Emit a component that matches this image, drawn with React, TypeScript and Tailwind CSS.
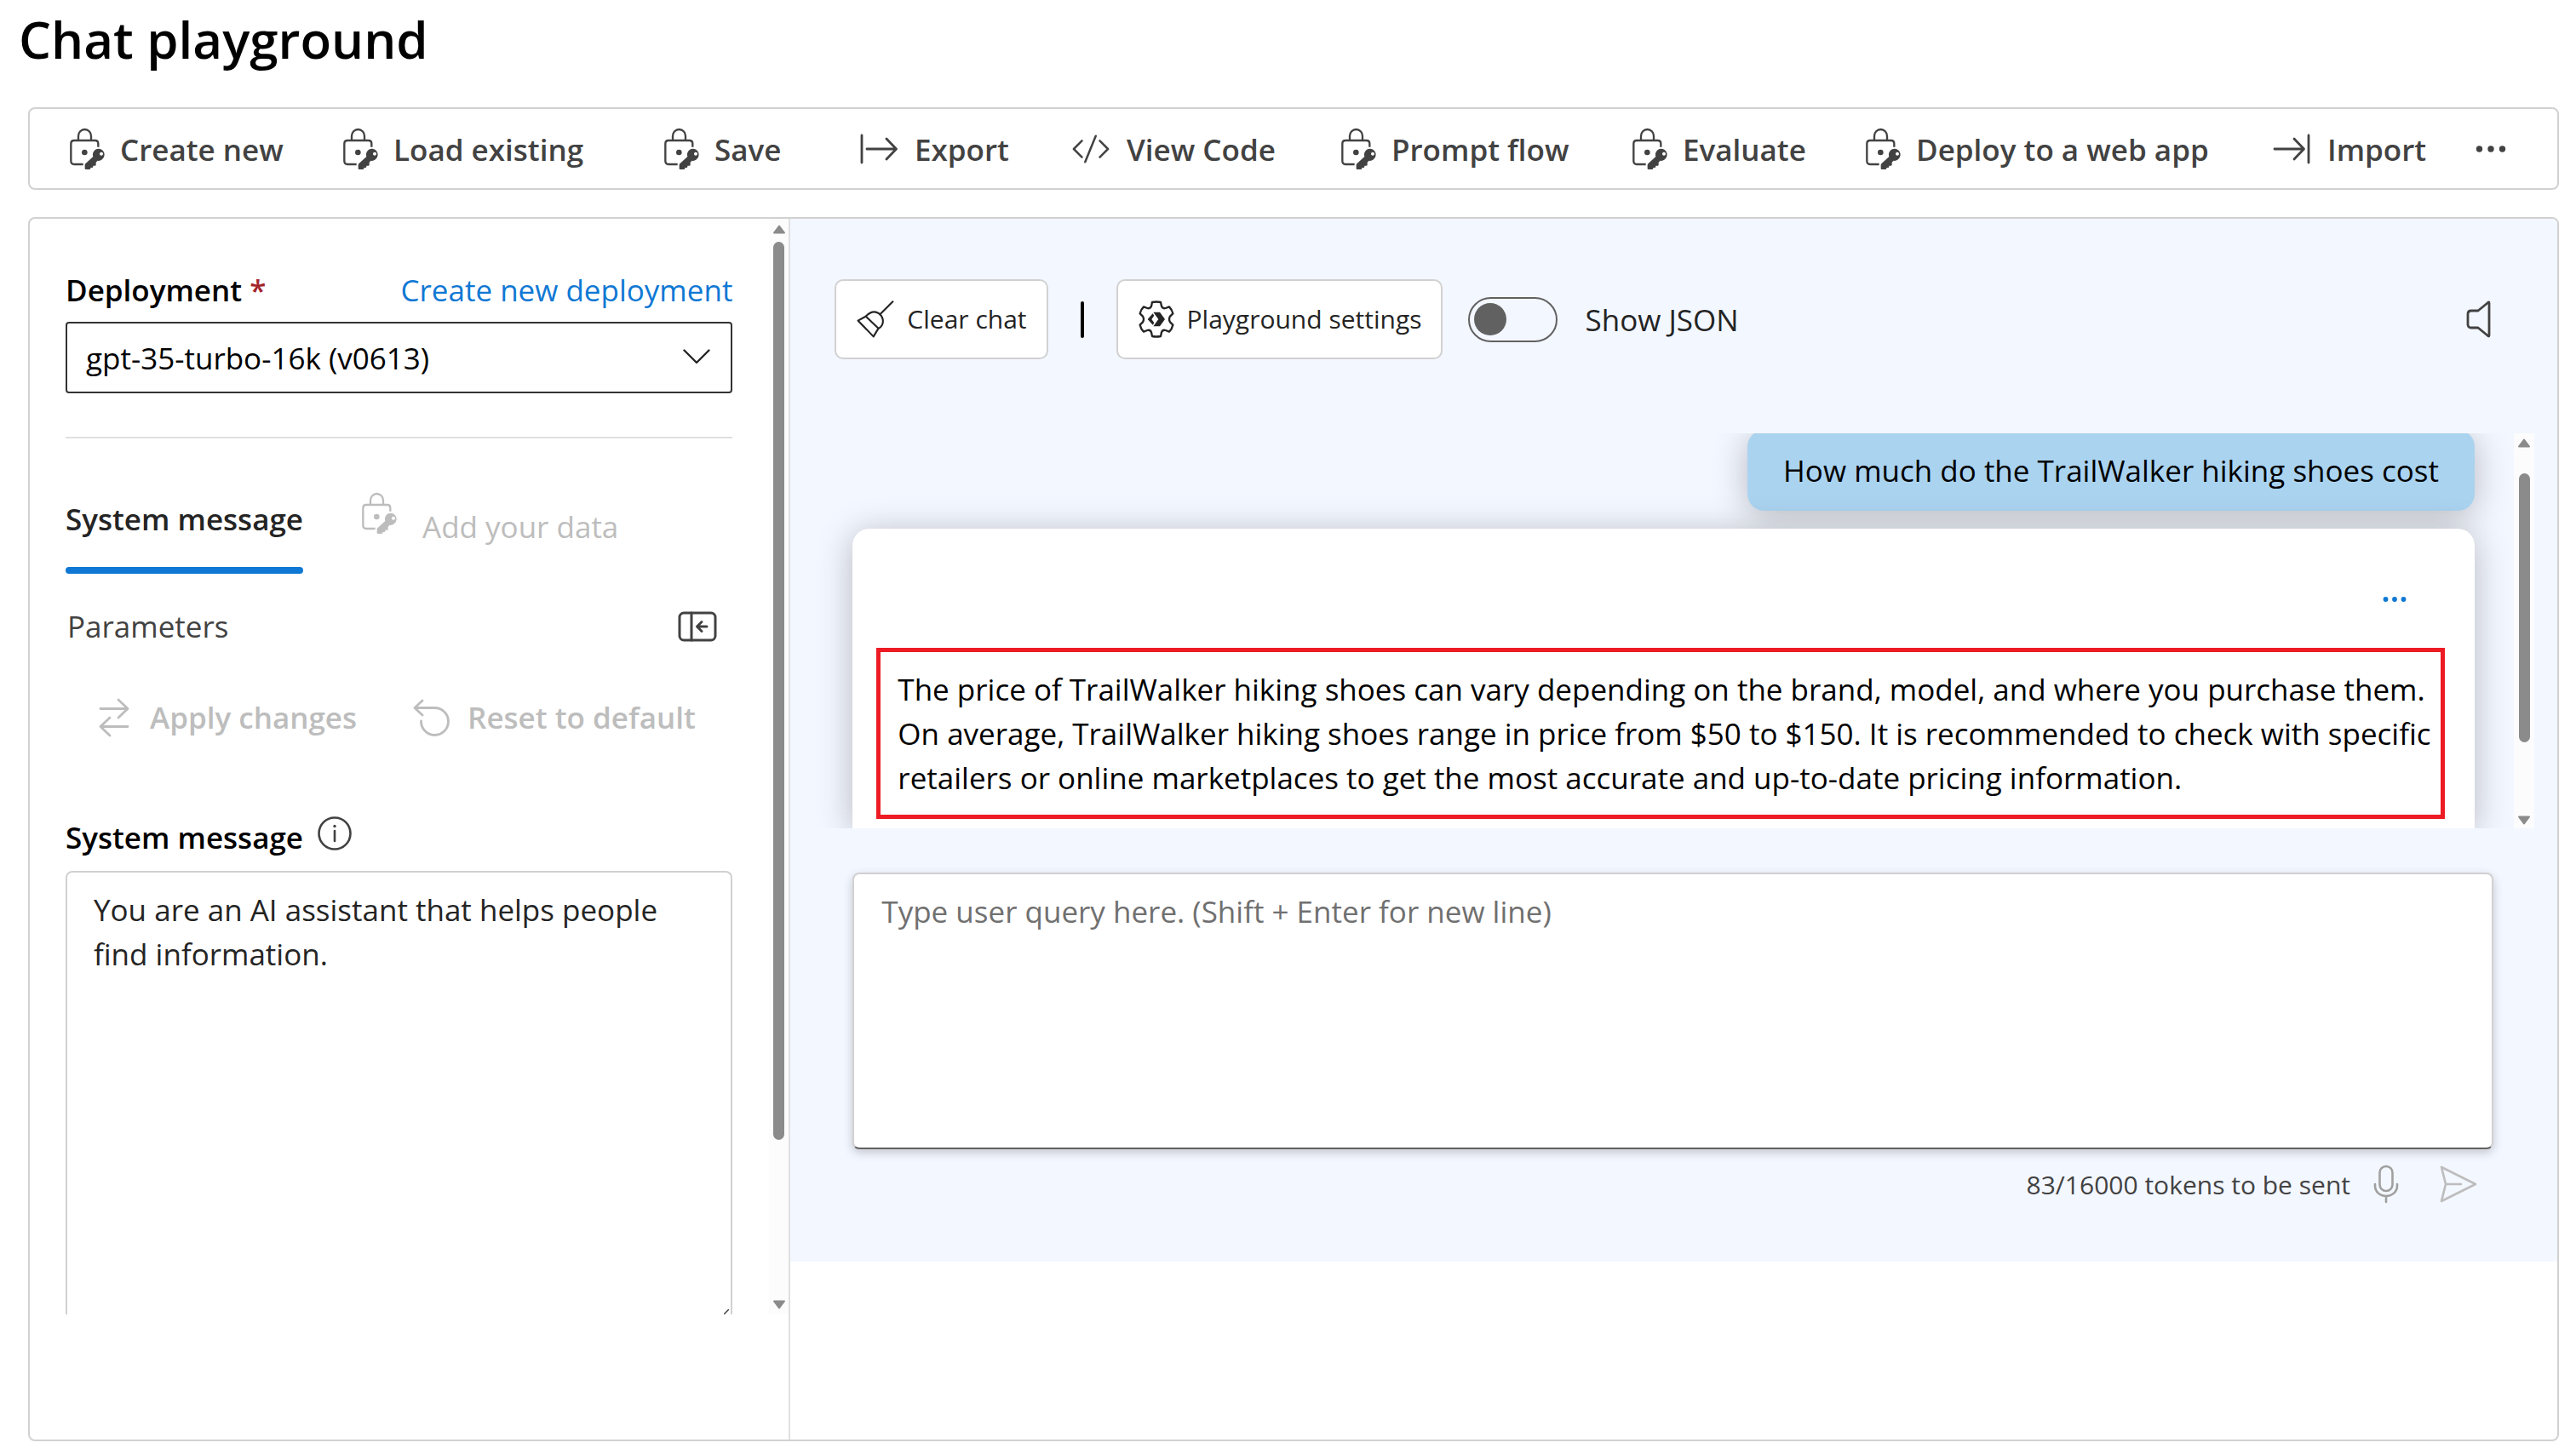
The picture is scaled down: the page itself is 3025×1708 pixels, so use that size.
import React from "react";

type IconProps = { className?: string };

function LockKeyIcon({ className = "" }: IconProps) {
  return (
    <svg viewBox="63 36 130 150" className={`h-[50px] w-11 shrink-0 ${className}`} fill="none" stroke="currentColor" strokeWidth="7" aria-hidden="true">
      <path d="M165 104V92Q165 81 154 81H80Q69 81 69 92V154Q69 165 80 165H112" />
      <path d="M95 80V65a22.500 23 0 0 1 45 0V80" />
      <circle cx="117" cy="123" r="10" fill="currentColor" stroke="none" />
      <path
        fillRule="evenodd"
        stroke="none"
        fill="currentColor"
        d="M168 110a21 21 0 1 1 -5 42.500L157 158V167Q157 170 153 170H147V174Q147 177 143 177H138V180Q138 183 134 183H121Q118 183 118 180V168Q118 165 120 163L147 138A21 21 0 0 1 168 110ZM176 122a6 6 0 1 0 0.010 0Z"
      />
    </svg>
  );
}

function ExportIcon() {
  return (
    <svg viewBox="0 0 44 36" className="h-9 w-11 shrink-0" fill="none" stroke="currentColor" strokeWidth="2.800" strokeLinecap="round" strokeLinejoin="round" aria-hidden="true">
      <path d="M2 2V34M8 18H42M31 6L42.500 18L31 30" />
    </svg>
  );
}

function ImportIcon() {
  return (
    <svg viewBox="0 0 44 36" className="h-9 w-11 shrink-0" fill="none" stroke="currentColor" strokeWidth="2.800" strokeLinecap="round" strokeLinejoin="round" aria-hidden="true">
      <path d="M42 2V34M2 18H36M25 6L36.500 18L25 30" />
    </svg>
  );
}

function CodeIcon() {
  return (
    <svg viewBox="0 0 46 36" className="h-9 w-11 shrink-0" fill="none" stroke="currentColor" strokeWidth="2.600" strokeLinecap="round" strokeLinejoin="round" aria-hidden="true">
      <path d="M12 8L2 18L12 28M34 8L44 18L34 28M29 2L16 34" />
    </svg>
  );
}

function MoreIcon({ className = "" }: IconProps) {
  return (
    <svg viewBox="0 0 36 10" className={className} fill="currentColor" aria-hidden="true">
      <circle cx="4.500" cy="5" r="3.700" />
      <circle cx="18" cy="5" r="3.700" />
      <circle cx="31.500" cy="5" r="3.700" />
    </svg>
  );
}

function BroomIcon() {
  return (
    <svg viewBox="108 98 138 140" className="h-[46px] w-[46px] shrink-0" fill="none" stroke="currentColor" strokeWidth="6.500" strokeLinecap="round" strokeLinejoin="round" aria-hidden="true">
      <path d="M239 105L195 149M115 173L142 158C160 140 176 138 189 147C205 158 207 178 200 190C196 197 190 200 187 202L170 230ZM143 158L187 200" />
    </svg>
  );
}

function GearIcon() {
  return (
    <svg viewBox="-66 -66 132 132" className="h-11 w-11 shrink-0" fill="none" stroke="currentColor" strokeWidth="7" strokeLinejoin="round" aria-hidden="true">
      <path d="M-15 -60Q0 -63 15 -60L18 -46Q22 -36 32 -39L45 -44Q55 -34 58 -20L48 -10Q42 0 48 10L58 20Q55 34 45 44L32 39Q22 36 18 46L15 60Q0 63 -15 60L-18 46Q-22 36 -32 39L-45 44Q-55 34 -58 20L-48 10Q-42 0 -48 -10L-58 -20Q-55 -34 -45 -44L-32 -39Q-22 -36 -18 -46Z" />
      <path d="M-11 -25H12L30 0L12 25H-11L7 0ZM-31 0L-13 -20L-8 -13L-17 0L-8 13L-13 20Z" fill="currentColor" stroke="none" />
    </svg>
  );
}

function SpeakerIcon() {
  return (
    <svg viewBox="0 0 30 44" className="h-11 w-[30px]" fill="none" stroke="currentColor" strokeWidth="2.800" strokeLinejoin="round" aria-hidden="true">
      <path d="M27 3V41Q27 43 25 41L14 32H6Q2 32 2 28V16Q2 12 6 12H14L25 3Q27 1 27 3Z" />
    </svg>
  );
}

function CollapseIcon() {
  return (
    <svg viewBox="0 0 46 36" className="h-9 w-[46px]" fill="none" stroke="currentColor" strokeWidth="3" strokeLinecap="round" strokeLinejoin="round" aria-hidden="true">
      <rect x="2" y="2" width="42" height="32" rx="5" />
      <path d="M16 2V34M23 18H34M28 12.500L22.500 18L28 23.500" />
    </svg>
  );
}

function SwapIcon() {
  return (
    <svg viewBox="0 0 36 46" className="h-[46px] w-9 shrink-0" fill="none" stroke="currentColor" strokeWidth="2.800" strokeLinecap="round" strokeLinejoin="round" aria-hidden="true">
      <path d="M2 12.500H34M23 2L34 12.500L23 23M34 33.500H2M13 23L2 33.500L13 44" />
    </svg>
  );
}

function ResetIcon() {
  return (
    <svg viewBox="0 0 44 44" className="h-11 w-11 shrink-0" fill="none" stroke="currentColor" strokeWidth="2.800" strokeLinecap="round" strokeLinejoin="round" aria-hidden="true">
      <path d="M11 2L2 10.500L11 19M2 10.500H25A16 16 0 1 1 9.500 26" />
    </svg>
  );
}

function InfoIcon() {
  return (
    <svg viewBox="0 0 42 42" className="h-[42px] w-[42px]" fill="none" stroke="currentColor" strokeWidth="2.600" strokeLinecap="round" aria-hidden="true">
      <circle cx="21" cy="21" r="18.500" />
      <path d="M21 18V30" />
      <circle cx="21" cy="12.500" r="1.700" fill="currentColor" stroke="none" />
    </svg>
  );
}

function MicIcon() {
  return (
    <svg viewBox="0 0 30 46" className="h-[46px] w-[30px]" fill="none" stroke="currentColor" strokeWidth="2.600" strokeLinecap="round" aria-hidden="true">
      <rect x="7.500" y="2" width="15" height="29" rx="7.500" />
      <path d="M2 23V25C2 32 8 37 15 37S28 32 28 25V23M15 37V44" />
    </svg>
  );
}

function SendIcon() {
  return (
    <svg viewBox="0 0 44 44" className="h-11 w-11" fill="none" stroke="currentColor" strokeWidth="2.600" strokeLinecap="round" strokeLinejoin="round" aria-hidden="true">
      <path d="M2 2L42 22L2 42L7 22ZM7 22H25" />
    </svg>
  );
}

function ScrollArrow({ down = false }: { down?: boolean }) {
  return (
    <svg viewBox="0 0 16 11" className="h-[11px] w-4" fill="#8b8b8b" stroke="#8b8b8b" strokeWidth="2" strokeLinejoin="round" aria-hidden="true">
      <path d={down ? "M2 1.500H14L8 9.500Z" : "M2 9.500H14L8 1.500Z"} />
    </svg>
  );
}

function Toolbar() {
  const items = [
    { label: "Create new", icon: <LockKeyIcon />, gap: "gap-4" },
    { label: "Load existing", icon: <LockKeyIcon />, gap: "gap-4" },
    { label: "Save", icon: <LockKeyIcon />, gap: "gap-4" },
    { label: "Export", icon: <ExportIcon />, gap: "gap-5" },
    { label: "View Code", icon: <CodeIcon />, gap: "gap-5" },
    { label: "Prompt flow", icon: <LockKeyIcon />, gap: "gap-4" },
    { label: "Evaluate", icon: <LockKeyIcon />, gap: "gap-4" },
    { label: "Deploy to a web app", icon: <LockKeyIcon />, gap: "gap-4" },
    { label: "Import", icon: <ImportIcon />, gap: "gap-5" },
  ];
  return (
    <div
      role="toolbar"
      aria-label="Playground actions"
      className="mr-5 ml-[33px] grid h-[97px] grid-cols-[321fr_377fr_231fr_249fr_315fr_342fr_274fr_479fr_238fr_96fr] items-center rounded-lg border-2 border-[#d1d1d1] pl-[46px] font-semibold text-[#424242]"
    >
      {items.map((item) => (
        <button key={item.label} type="button" className={`flex items-center whitespace-nowrap ${item.gap}`}>
          {item.icon}
          <span className="pt-0.5">{item.label}</span>
        </button>
      ))}
      <button type="button" aria-label="More actions" className="flex h-11 items-center">
        <MoreIcon className="h-[10px] w-9" />
      </button>
    </div>
  );
}

function SetupPanel() {
  return (
    <section aria-label="Assistant setup" className="flex w-[30.1%] shrink-0 border-r-2 border-[#e0e0e0] pb-[147px]">
      <div className="flex min-w-0 flex-1 flex-col pt-[58px] pr-[43px] pl-[42px]">
        <div className="flex items-center justify-between">
          <label htmlFor="deployment" className="font-semibold text-black">
            Deployment <span className="text-[#a4262c]">*</span>
          </label>
          <a href="#new-deployment" className="text-[#0f78d4]">
            Create new deployment
          </a>
        </div>
        <div className="relative mt-[11px]">
          <select id="deployment" className="h-[84px] w-full appearance-none rounded border-2 border-[#333] bg-white pt-0.5 pr-20 pl-[22px] text-black">
            <option>gpt-35-turbo-16k (v0613)</option>
          </select>
          <svg viewBox="0 0 32 18" className="pointer-events-none absolute top-8 right-[26px] h-[18px] w-8" fill="none" stroke="#242424" strokeWidth="2.400" strokeLinecap="round" strokeLinejoin="round" aria-hidden="true">
            <path d="M1.500 1.500L16 16L30.500 1.500" />
          </svg>
        </div>
        <hr className="mt-[51px] border-t-2 border-[#e0e0e0]" />

        <div role="tablist" className="mt-[63px] flex items-start gap-[68px]">
          <button role="tab" type="button" aria-selected="true" className="pt-1.5 font-semibold text-[#242424]">
            System message
            <span className="mt-[30px] block h-2 rounded-full bg-[#0f78d4]" />
          </button>
          <button role="tab" type="button" aria-selected="false" disabled className="flex text-[#bdbdbd]">
            <LockKeyIcon />
            <span className="mt-[15px] ml-7">Add your data</span>
          </button>
        </div>

        <div className="mt-9 flex items-center justify-between pr-[18px] pl-0.5 text-[#424242]">
          <span>Parameters</span>
          <button type="button" aria-label="Collapse panel">
            <CollapseIcon />
          </button>
        </div>

        <div className="mt-[55px] flex items-center pl-[39px] font-semibold whitespace-nowrap text-[#bdbdbd]">
          <button type="button" disabled className="flex items-center gap-6">
            <SwapIcon />
            Apply changes
          </button>
          <button type="button" disabled className="ml-[66px] flex items-center gap-5">
            <ResetIcon />
            Reset to default
          </button>
        </div>

        <div className="mt-[89px] flex items-start gap-4">
          <label htmlFor="system-message" className="font-semibold text-black">
            System message
          </label>
          <button type="button" aria-label="About the system message" className="text-[#424242]">
            <InfoIcon />
          </button>
        </div>
        <div className="relative mt-[13px] flex flex-1">
          <textarea
            id="system-message"
            defaultValue="You are an AI assistant that helps people find information."
            className="w-full resize-none rounded-t-lg border-2 border-b-0 border-[#d1d1d1] py-[18px] pr-10 pl-[31px] text-[#242424]"
          />
          <svg viewBox="0 0 6 6" className="absolute right-1 bottom-0 h-1.5 w-1.5" stroke="#424242" strokeWidth="1.500" aria-hidden="true">
            <path d="M0 6L6 0" />
          </svg>
        </div>
      </div>
      <div aria-hidden="true" className="flex w-[23px] flex-col items-center bg-[#fcfcfc] pt-[7px] pb-1.5">
        <ScrollArrow />
        <div className="mt-[9px] w-[13px] flex-1 rounded-full bg-[#8b8b8b]" />
        <div className="h-[188px]" />
        <ScrollArrow down />
      </div>
    </section>
  );
}

function ChatPanel() {
  return (
    <section aria-label="Chat session" className="min-w-0 flex-1">
      <div className="rounded-tr-md bg-[#f3f7ff] pt-[71px] pb-[68px]">
        <div className="flex items-center pr-[77px] pl-[52px] text-[#242424]">
          <button type="button" className="flex h-[94px] items-center gap-3.5 rounded-[10px] border-2 border-[#d1d1d1] bg-white px-[23px] text-[30px] whitespace-nowrap">
            <BroomIcon />
            Clear chat
          </button>
          <div className="mx-[38px] h-[43px] w-1 rounded-full bg-black" />
          <button type="button" className="flex h-[94px] items-center gap-3.5 rounded-[10px] border-2 border-[#d1d1d1] bg-white px-[23px] text-[30px] whitespace-nowrap">
            <GearIcon />
            Playground settings
          </button>
          <label className="ml-[30px] flex items-center gap-8">
            <input
              type="checkbox"
              role="switch"
              className="flex h-[53px] w-[105px] appearance-none items-center rounded-full border-2 border-[#616161] px-[5px] before:h-[38px] before:w-[38px] before:rounded-full before:bg-[#616161]"
            />
            <span className="pt-0.5">Show JSON</span>
          </label>
          <button type="button" aria-label="Speaker" className="ml-auto text-[#424242]">
            <SpeakerIcon />
          </button>
        </div>

        <div className="mt-[87px] flex h-[464px] justify-between overflow-hidden pr-[27px] pl-[73px]">
          <div className="-mt-1 mr-[46px] flex min-w-0 flex-1 flex-col text-black">
            <div className="self-end rounded-[20px] bg-[#aad3f0] px-[42px] pt-[22px] pb-[21px] shadow-[0_5px_40px_rgba(0,0,0,0.250)]">How much do the TrailWalker hiking shoes cost</div>
            <div className="relative mt-[21px] flex-1 rounded-t-[20px] bg-white px-7 pt-[67px] shadow-[0_5px_40px_rgba(0,0,0,0.250)]">
              <button type="button" aria-label="Message options" className="mr-[52px] ml-auto flex h-8 items-center text-[#0f78d4]">
                <MoreIcon className="h-2 w-7" />
              </button>
              <p className="mt-[41px] mr-[7px] border-[5px] border-[#ed1c24] pt-[18px] pr-2 pb-[17px] pl-5 whitespace-nowrap">
                The price of TrailWalker hiking shoes can vary depending on the brand, model, and where you purchase them.
                <br />
                On average, TrailWalker hiking shoes range in price from $50 to $150. It is recommended to check with specific
                <br />
                retailers or online marketplaces to get the most accurate and up-to-date pricing information.
              </p>
            </div>
          </div>
          <div aria-hidden="true" className="relative flex w-6 flex-col items-center bg-[#fcfcfc] pt-1.5 pb-1">
            <ScrollArrow />
            <div className="mt-[30px] w-[13px] flex-1 rounded-full bg-[#8b8b8b]" />
            <div className="h-[86px]" />
            <ScrollArrow down />
          </div>
        </div>

        <div className="mt-[52px] pr-[75px] pl-[73px]">
          <textarea
            aria-label="User query"
            placeholder="Type user query here. (Shift + Enter for new line)"
            className="block h-[325px] w-full resize-none rounded-lg border-2 border-[#d1d1d1] border-b-[#616161] bg-white px-8 py-[18px] shadow-[0_4px_12px_rgba(0,0,0,0.200)] placeholder:text-[#707070]"
          />
          <div className="mt-[18px] flex items-center justify-end pr-[19px] text-[30px] leading-[45px] text-[#424242]">
            <span>83/16000 tokens to be sent</span>
            <button type="button" aria-label="Voice input" className="ml-[27px] text-[#a0a0a0]">
              <MicIcon />
            </button>
            <button type="button" aria-label="Send" className="ml-12 text-[#bdbdbd]">
              <SendIcon />
            </button>
          </div>
        </div>
      </div>
    </section>
  );
}

export default function App() {
  return (
    <main className="flex min-h-screen flex-col bg-white pb-[15px] font-['Open_Sans','Noto_Sans',sans-serif] text-[35px] leading-[52px]">
      <h1 className="px-[22px] pt-px pb-[35px] text-[60px] leading-[90px] font-semibold text-black">Chat playground</h1>
      <Toolbar />
      <div className="mt-8 mr-5 ml-[33px] flex flex-1 rounded-lg border-2 border-[#d1d1d1]">
        <SetupPanel />
        <ChatPanel />
      </div>
    </main>
  );
}
